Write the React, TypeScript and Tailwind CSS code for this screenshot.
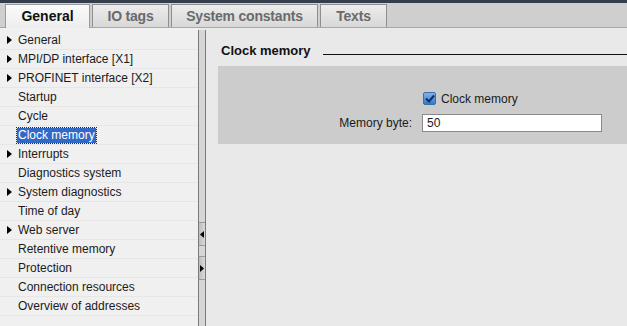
import React from "react";

const items: { label: string; arrow?: boolean; selected?: boolean }[] = [
  { label: "General", arrow: true },
  { label: "MPI/DP interface [X1]", arrow: true },
  { label: "PROFINET interface [X2]", arrow: true },
  { label: "Startup" },
  { label: "Cycle" },
  { label: "Clock memory", selected: true },
  { label: "Interrupts", arrow: true },
  { label: "Diagnostics system" },
  { label: "System diagnostics", arrow: true },
  { label: "Time of day" },
  { label: "Web server", arrow: true },
  { label: "Retentive memory" },
  { label: "Protection" },
  { label: "Connection resources" },
  { label: "Overview of addresses" },
];

const tabs = [
  { label: "General", w: "w-[85px]", active: true },
  { label: "IO tags", w: "w-[77px]" },
  { label: "System constants", w: "w-[147px]" },
  { label: "Texts", w: "w-[67px]" },
];

function Caret({ dir, w = 4, h = 7 }: { dir: "right" | "left"; w?: number; h?: number }) {
  return (
    <svg width={w} height={h} viewBox={`0 0 ${w} ${h}`}>
      {dir === "right" ? (
        <path d={`M0 0 L${w} ${h / 2} L0 ${h} Z`} fill="#000" />
      ) : (
        <path d={`M${w} 0 L0 ${h / 2} L${w} ${h} Z`} fill="#000" />
      )}
    </svg>
  );
}

export default function App() {
  return (
    <div
      className="w-[627px] h-[326px] overflow-hidden flex flex-col bg-[#e9e9e9] text-[#1b1b1b]"
      style={{ fontFamily: '"Liberation Sans", Arial, sans-serif' }}
    >
      {/* top strip */}
      <div className="h-[3px] bg-[#343e4d] shrink-0" />

      {/* Tabs */}
      <div className="h-[25px] shrink-0 bg-[#cfcfcf] flex items-end gap-[2px] pl-[5px] border-b border-[#a8a8a8]">
        {tabs.map((t) => (
          <div
            key={t.label}
            className={`${t.w} h-[23px] flex items-center justify-center text-[14px] font-bold border border-b-0 ${
              t.active
                ? "bg-gradient-to-b from-[#fafafa] to-[#eeeeee] border-[#9a9a9a] text-[#111] h-[24px] -mb-px"
                : "bg-gradient-to-b from-[#ececec] to-[#d8d8d8] border-[#8f8f8f] text-[#6a6a6a] tracking-[-0.2px]"
            }`}
          >
            {t.label}
          </div>
        ))}
      </div>

      <div className="flex-1 flex min-h-0">
        {/* Left tree */}
        <div className="w-[198px] shrink-0 bg-[#f0f0f0] pt-[3px] text-[12px]">
          {items.map((it) => (
            <div key={it.label} className="h-[19px] flex items-center border-b border-[#e6e6e6]">
              <div className="w-[17px] flex justify-center pl-[1px]">{it.arrow && <Caret dir="right" w={5} h={8} />}</div>
              <span
                className={
                  it.selected
                    ? "bg-[#3169c6] text-white px-[1px] outline outline-1 outline-dotted outline-[#1a2a50] leading-[15px]"
                    : "px-[1px]"
                }
              >
                {it.label}
              </span>
            </div>
          ))}
        </div>

        {/* Splitter */}
        <div className="w-[8px] shrink-0 flex flex-col border-l border-r border-[#7a7a7a] bg-[#d6d6d6] mt-[2px]">
          <div className="h-[192px]" />
          <div className="h-[24px] border-y border-[#9a9a9a] bg-gradient-to-r from-[#bdbdbd] to-[#d9d9d9] flex items-center justify-center">
            <Caret dir="left" />
          </div>
          <div className="h-[10px]" />
          <div className="h-[24px] border-y border-[#9a9a9a] bg-gradient-to-r from-[#bdbdbd] to-[#d9d9d9] flex items-center justify-center">
            <Caret dir="right" />
          </div>
          <div className="flex-1" />
        </div>

        {/* Right content */}
        <div className="flex-1 bg-[#e9e9e9] pl-[12px] pt-[13px]">
          <div className="flex items-end gap-[12px] pl-[3px] h-[18px]">
            <span className="text-[13px] font-bold text-[#111] leading-[16px]">Clock memory</span>
            <div className="flex-1 border-b border-[#111] mb-[4px]" />
          </div>
          <div className="mt-[7px] h-[78px] bg-[#cccccc] flex flex-col pt-[24px]">
            <div className="flex items-center h-[17px] pl-[205px] gap-[5px]">
              <div className="w-[13px] h-[13px] rounded-[2px] border border-[#3a6fa8] bg-gradient-to-b from-[#7fb4e6] to-[#2f7bd0] flex items-center justify-center">
                <svg width="10" height="9" viewBox="0 0 10 9">
                  <path d="M1 4.5 L4 7.5 L9 1.5" stroke="#0d2c63" strokeWidth="2" fill="none" />
                </svg>
              </div>
              <span className="text-[12px]">Clock memory</span>
            </div>
            <div className="flex items-center mt-[7px] h-[18px]">
              <span className="w-[194px] text-right text-[12px]">Memory byte:</span>
              <div className="ml-[10px] w-[180px] h-[18px] bg-white border border-[#8a8a8a] flex items-center pl-[4px] text-[12px]">
                50
              </div>
            </div>
          </div>
        </div>
      </div>
    </div>
  );
}
